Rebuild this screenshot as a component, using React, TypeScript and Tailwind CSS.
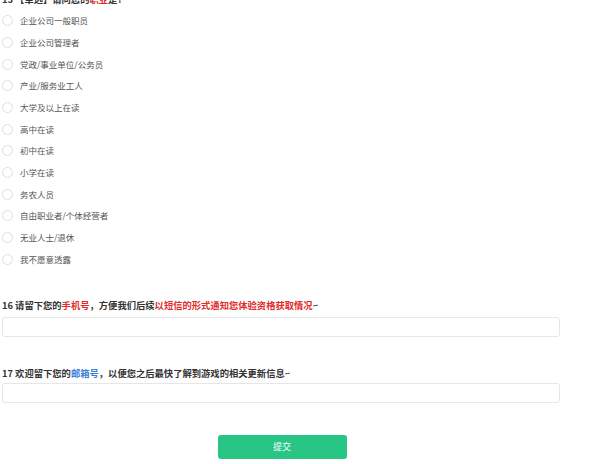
const options = [
  '企业公司一般职员',
  '企业公司管理者',
  '党政/事业单位/公务员',
  '产业/服务业工人',
  '大学及以上在读',
  '高中在读',
  '初中在读',
  '小学在读',
  '务农人员',
  '自由职业者/个体经营者',
  '无业人士/退休',
  '我不愿意透露',
];

export default function App() {
  return (
    <div
      className="w-[590px] h-[464px] overflow-hidden bg-white pl-[2px]"
      style={{ fontFamily: '"Noto Sans CJK SC", "Liberation Sans", sans-serif' }}
    >
      {/* Q15, its top is cut off by the page edge in the reference */}
      <div className="-mt-[7px] h-[12px] leading-[12px] text-[9.3px] font-bold text-[#333]">
        15 【单选】请问您的<span className="text-[#e02b2b]">职业</span>是?
      </div>
      <div className="pt-[5px] flex flex-col">
        {options.map((o) => (
          <div key={o} className="h-[21.67px] flex items-center">
            <span className="w-[11px] h-[11px] rounded-full border border-[#dedede] bg-white shrink-0" />
            <span className="ml-[7px] text-[8.5px] text-[#555]">{o}</span>
          </div>
        ))}
      </div>

      {/* Q16 */}
      <div className="mt-[28px] w-[558px]">
        <div className="h-[14px] leading-[14px] text-[9.3px] font-bold text-[#333]">
          16 请留下您的<span className="text-[#e02b2b]">手机号</span>，方便我们后续
          <span className="text-[#e02b2b]">以短信的形式通知您体验资格获取情况</span>~
        </div>
        <div className="mt-[5px] h-[20px] rounded-[3px] border border-[#e6e6e6] bg-white" />
      </div>

      {/* Q17 */}
      <div className="mt-[29px] w-[558px]">
        <div className="h-[14px] leading-[14px] text-[9.3px] font-bold text-[#333]">
          17 欢迎留下您的<span className="text-[#3b7dd8]">邮箱号</span>，以便您之后最快了解到游戏的相关更新信息~
        </div>
        <div className="mt-[3px] h-[20px] rounded-[3px] border border-[#e6e6e6] bg-white" />
      </div>

      <div className="mt-[32px] w-[560px] flex justify-center">
        <button className="w-[129px] h-[24px] rounded-[3px] bg-[#28c584] text-white text-[9px]">
          提交
        </button>
      </div>
    </div>
  );
}
